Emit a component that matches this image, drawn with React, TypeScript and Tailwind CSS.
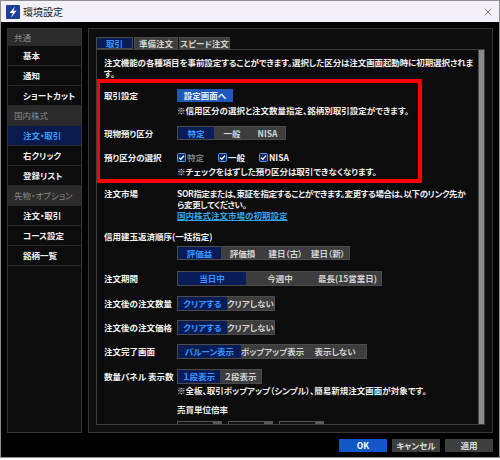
import type { ReactNode } from "react";
import { X } from "lucide-react";

const SEL = "bg-[#0a1c58] text-[#3a96ff]";
const OFF = "bg-[#3d3d3d] text-[#d4d4d4]";

type SegItem = { label: string; w: string };

function Segmented({ items, active = 0, h = "h-[15px]" }: { items: SegItem[]; active?: number; h?: string }) {
  return (
    <div className={`flex ${h} border border-[#4b4b4b]`}>
      {items.map((it, i) => (
        <div
          key={it.label}
          className={`${it.w} flex items-center justify-center whitespace-nowrap ${i === active ? SEL : OFF}`}
        >
          {it.label}
        </div>
      ))}
    </div>
  );
}

function Row({ label, children, className = "" }: { label: string; children?: ReactNode; className?: string }) {
  return (
    <div className={`flex items-center ${className}`}>
      <div className="w-[73px] shrink-0 text-[#f2f2f2]">{label}</div>
      {children}
    </div>
  );
}

function Check({ label, dim = false }: { label: string; dim?: boolean }) {
  return (
    <div className="w-[41px] flex items-center gap-[1px]">
      <svg width="9" height="9" viewBox="0 0 9 9">
        <rect x="0.5" y="0.5" width="8" height="8" rx="1" fill="#0d2a66" stroke="#4c9cf0" />
        <path d="M2 4.6 L3.8 6.3 L7 2.6" fill="none" stroke="#ffffff" strokeWidth="1.3" />
      </svg>
      <span className={dim ? "text-[#7d7d7d]" : "text-[#f2f2f2]"}>{label}</span>
    </div>
  );
}

const SIDE = [
  { label: "共通", head: true, h: "h-[17px]" },
  { label: "基本" },
  { label: "通知" },
  { label: "ショートカット" },
  { label: "国内株式", head: true },
  { label: "注文・取引", active: true },
  { label: "右クリック" },
  { label: "登録リスト" },
  { label: "先物・オプション", head: true },
  { label: "注文・取引" },
  { label: "コース設定" },
  { label: "銘柄一覧" },
];

export default function App() {
  return (
    <div className="w-[500px] h-[460px] bg-white font-['Noto_Sans_CJK_JP','Liberation_Sans',sans-serif] [font-feature-settings:'palt']">
      <div className="h-[458px] border border-[#8f8f8f] flex flex-col">
        {/* Title bar */}
        <div className="h-[21px] bg-[#f4f0f7] flex items-center pl-[5px] pr-[5px]">
          <svg width="14" height="14" viewBox="0 0 14 14">
            <rect width="14" height="14" rx="1" fill="#1d3f95" />
            <polygon points="9,1.5 3.5,8 6.8,8 5,12.5 10.5,5.8 7.2,5.8" fill="#ffffff" />
          </svg>
          <span className="ml-[3px] text-[10px] text-[#1a1a1a]">環境設定</span>
          <div className="flex-1" />
          <X size={12} strokeWidth={1.3} className="text-[#333]" />
        </div>

        {/* Body */}
        <div className="flex-1 bg-black flex flex-col px-[6px] pt-[6px] text-[8.5px] font-bold">
          <div className="h-[405px] flex gap-[6px]">
            {/* Sidebar */}
            <div className="w-[75px] border border-[#363636] bg-[#0b0b0b] flex flex-col">
              {SIDE.map((s, i) => (
                <div
                  key={i}
                  className={`${s.h ?? "h-[20px]"} flex items-center border-b border-[#2a2a2a] ${
                    s.head
                      ? "bg-[#2b2b2b] text-[#8a8a8a] font-normal pl-[6px]"
                      : s.active
                      ? "bg-[#0a1a4c] text-[#3a9cff] pl-[15px]"
                      : "bg-[#0c0c0c] text-[#f0f0f0] pl-[15px]"
                  }`}
                >
                  {s.label}
                </div>
              ))}
              <div className="flex-1 bg-[#0d0d0d]" />
            </div>

            {/* Main panel */}
            <div className="flex-1 border border-[#363636] bg-[#0e0e0e] flex flex-col px-[7px] pt-[8px] pb-[7px]">
              <div className="flex gap-[1px] h-[12px]">
                <div className={`w-[37px] flex items-center justify-center border border-[#4a4a4a] ${SEL}`}>取引</div>
                <div className={`w-[44px] flex items-center justify-center border border-[#4a4a4a] ${OFF}`}>準備注文</div>
                <div className={`w-[51px] flex items-center justify-center border border-[#4a4a4a] ${OFF}`}>スピード注文</div>
              </div>

              <div className="flex-1 border border-[#3e3e3e] bg-[#0c0c0c] flex overflow-hidden">
                <div className="flex-1 overflow-hidden pt-[7px] pl-[7px] text-[#ececec] leading-[11px]">
                  <p className="whitespace-nowrap tracking-[-0.1px]">
                    注文機能の各種項目を事前設定することができます。選択した区分は注文画面起動時に初期選択されま
                    <br />
                    す。
                  </p>

                  {/* Highlighted block */}
                  <div className="-ml-[8px] w-[326px] border-[4px] border-[#ff0000] pl-[4px] pt-[6px] pb-[2px]">
                    <Row label="取引設定" className="h-[13px]">
                      <div className="w-[56px] h-[13px] bg-[#1f57b8] text-[#e8f0ff] flex items-center justify-center">
                        設定画面へ
                      </div>
                    </Row>
                    <div className="mt-[3px] ml-[73px] h-[11px] whitespace-nowrap">
                      ※信用区分の選択と注文数量指定、銘柄別取引設定ができます。
                    </div>
                    <Row label="現物預り区分" className="mt-[10px]">
                      <Segmented
                        h="h-[14px]"
                        items={[
                          { label: "特定", w: "w-[36px]" },
                          { label: "一般", w: "w-[36px]" },
                          { label: "NISA", w: "w-[35px]" },
                        ]}
                      />
                    </Row>
                    <Row label="預り区分の選択" className="mt-[12px] h-[11px]">
                      <Check label="特定" dim />
                      <Check label="一般" />
                      <Check label="NISA" />
                    </Row>
                    <div className="mt-[3px] ml-[73px] h-[11px] whitespace-nowrap">
                      ※チェックをはずした預り区分は取引できなくなります。
                    </div>
                  </div>

                  <div className="mt-[5px] flex items-start">
                    <div className="w-[73px] shrink-0 text-[#f2f2f2]">注文市場</div>
                    <div className="whitespace-nowrap tracking-[-0.4px]">
                      SOR指定または、東証を指定することができます。変更する場合は、以下のリンク先か
                      <br />
                      ら変更してください。
                      <br />
                      <span className="text-[#33a6ec] underline tracking-normal">国内株式注文市場の初期設定</span>
                    </div>
                  </div>

                  <div className="mt-[10px] h-[11px] text-[#f2f2f2]">信用建玉返済順序(一括指定)</div>
                  <div className="mt-[4px] ml-[73px] flex">
                    <Segmented
                      h="h-[14px]"
                      items={[
                        { label: "評価益", w: "w-[43px]" },
                        { label: "評価損", w: "w-[43px]" },
                        { label: "建日（古）", w: "w-[43px]" },
                        { label: "建日（新）", w: "w-[42px]" },
                      ]}
                    />
                  </div>

                  <Row label="注文期間" className="mt-[11px]">
                    <Segmented
                      items={[
                        { label: "当日中", w: "w-[68px]" },
                        { label: "今週中", w: "w-[68px]" },
                        { label: "最長(15営業日)", w: "w-[67px]" },
                      ]}
                    />
                  </Row>
                  <Row label="注文後の注文数量" className="mt-[10px]">
                    <Segmented
                      items={[
                        { label: "クリアする", w: "w-[49px]" },
                        { label: "クリアしない", w: "w-[47px]" },
                      ]}
                    />
                  </Row>
                  <Row label="注文後の注文価格" className="mt-[9px]">
                    <Segmented
                      items={[
                        { label: "クリアする", w: "w-[49px]" },
                        { label: "クリアしない", w: "w-[47px]" },
                      ]}
                    />
                  </Row>
                  <Row label="注文完了画面" className="mt-[9px]">
                    <Segmented
                      items={[
                        { label: "バルーン表示", w: "w-[63px]" },
                        { label: "ポップアップ表示", w: "w-[63px]" },
                        { label: "表示しない", w: "w-[62px]" },
                      ]}
                    />
                  </Row>
                  <Row label="数量パネル 表示数" className="mt-[10px]">
                    <Segmented
                      items={[
                        { label: "１段表示", w: "w-[42px]" },
                        { label: "２段表示", w: "w-[41px]" },
                      ]}
                    />
                  </Row>
                  <div className="mt-[1px] ml-[73px] h-[11px] whitespace-nowrap">
                    ※全板、取引ポップアップ（シンプル）、簡易新規注文画面が対象です。
                  </div>
                  <div className="mt-[8px] ml-[73px] h-[11px]">売買単位倍率</div>
                  <div className="mt-[6px] ml-[73px] flex gap-[6px]">
                    {["a", "b", "c"].map((k) => (
                      <div key={k} className="w-[45px] h-[14px] border border-[#555] bg-[#121212] flex justify-end">
                        <div className="w-[8px] bg-[#5a5a5a]" />
                      </div>
                    ))}
                  </div>
                </div>
                {/* Scrollbar */}
                <div className="w-[6px] bg-[#8c8c8c] border-l border-[#4a4a4a]" />
              </div>
            </div>
          </div>

          {/* Footer buttons */}
          <div className="mt-[6px] flex justify-end gap-[5px]">
            <div className="w-[48px] h-[13px] bg-[#1256c8] text-white flex items-center justify-center">OK</div>
            <div className="w-[48px] h-[13px] bg-[#3e3e3e] text-[#dcdcdc] flex items-center justify-center">キャンセル</div>
            <div className="w-[48px] h-[13px] bg-[#3e3e3e] text-[#dcdcdc] flex items-center justify-center">適用</div>
          </div>
        </div>
      </div>
    </div>
  );
}
